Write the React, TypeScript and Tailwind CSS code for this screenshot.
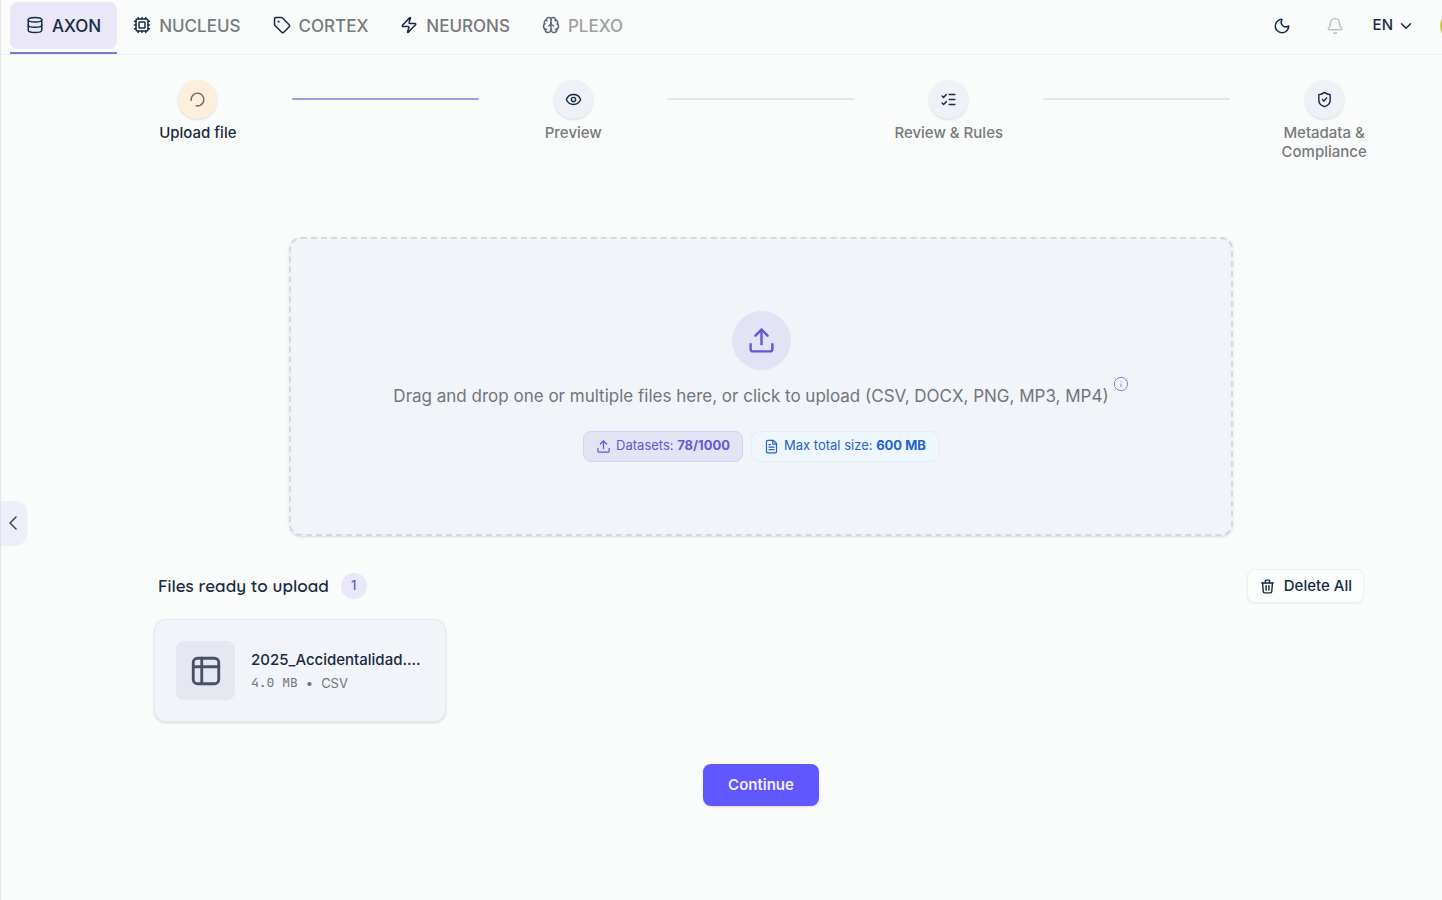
import { Fragment } from 'react';
import {
    Bell,
    Brain,
    ChevronDown,
    ChevronLeft,
    Cpu,
    Database,
    Eye,
    FileText,
    Info,
    ListChecks,
    Moon,
    ShieldCheck,
    Tag,
    Upload,
    Zap,
} from 'lucide-react';
import { TbTrash } from 'react-icons/tb';
import clsx from 'clsx';

const tabs = [
    { name: 'AXON', icon: Database, active: true },
    { name: 'NUCLEUS', icon: Cpu },
    { name: 'CORTEX', icon: Tag },
    { name: 'NEURONS', icon: Zap },
    { name: 'PLEXO', icon: Brain, disabled: true },
];

const steps = [
    { label: 'Upload file', icon: SpinnerIcon, current: true },
    { label: 'Preview', icon: Eye },
    { label: 'Review & Rules', icon: ListChecks },
    { label: 'Metadata & Compliance', icon: ShieldCheck },
];

const files = [{ name: '2025_Accidentalidad....', size: '4.0 MB', type: 'CSV' }];

function SpinnerIcon({ className }: { className?: string }) {
    return (
        <svg className={className} viewBox="0 0 24 24" fill="none" stroke="currentColor" strokeWidth={2} strokeLinecap="round">
            <path d="M3.100 13.300 A9 9 0 1 1 10.400 20.900" />
        </svg>
    );
}

function TableIcon({ className }: { className?: string }) {
    return (
        <svg className={className} viewBox="0 0 24 24" fill="none" stroke="currentColor" strokeWidth={2} strokeLinecap="round" strokeLinejoin="round">
            <rect x="3" y="3" width="18" height="18" rx="3" />
            <path d="M3 9h18M9 3v18" />
        </svg>
    );
}

function Header() {
    return (
        <header className="flex h-[55px] items-stretch justify-between border-b border-[#edeff0] pl-[9px]">
            <nav className="flex">
                {tabs.map(({ name, icon: Icon, active, disabled }) => (
                    <a
                        key={name}
                        href="#"
                        aria-disabled={disabled}
                        className={clsx(
                            'flex flex-col pt-[2px] text-[17px] font-medium',
                            active ? 'border-b-2 border-[#7d74d6] text-[#182b40]' : 'text-[#777a7c]',
                            disabled && 'opacity-70'
                        )}
                    >
                        <span className={clsx('flex h-[47px] items-center gap-2 rounded-lg px-4 pt-[3px]', active && 'bg-[#e9e7f8]')}>
                            <Icon className="mb-1 size-[18px] text-[#182b40]" />
                            {name}
                        </span>
                    </a>
                ))}
            </nav>
            <div className="flex items-center overflow-hidden pb-[3px] text-[#182b40]">
                <button type="button" aria-label="Dark mode" className="mr-[35px]">
                    <Moon className="size-[18px]" />
                </button>
                <button type="button" aria-label="Notifications" className="mr-[29px] text-[#bfc1c3]">
                    <Bell className="size-[18px]" />
                </button>
                <button type="button" className="mr-[25px] flex items-center gap-1 text-[15px] font-medium">
                    EN
                    <ChevronDown className="size-[18px]" />
                </button>
                <span className="-mr-[30px] size-8 shrink-0 rounded-full bg-[#c9c94a]" />
            </div>
        </header>
    );
}

function Stepper() {
    return (
        <ol className="grid grid-cols-7">
            {steps.map(({ label, icon: Icon, current }, index) => (
                <Fragment key={label}>
                    {index > 0 && (
                        <li
                            aria-hidden
                            className={clsx('mt-[18px] h-[2px] rounded-full', index === 1 ? 'bg-[#a49be6]' : 'bg-[#e3e6e8]')}
                        />
                    )}
                    <li className="flex flex-col items-center">
                        <span
                            className={clsx(
                                'flex size-[39px] items-center justify-center rounded-full shadow-sm',
                                current ? 'bg-[#fdeedd] text-[#7a6250]' : 'bg-[#eff1f8] text-[#182b40]'
                            )}
                        >
                            <Icon className="size-[17px]" />
                        </span>
                        <span
                            className={clsx(
                                'mt-1 max-w-[110px] text-center text-[15px] leading-[19px] font-medium',
                                current ? 'text-[#182b40]' : 'text-[#777a7c]'
                            )}
                        >
                            {label}
                        </span>
                    </li>
                </Fragment>
            ))}
        </ol>
    );
}

function Dropzone() {
    return (
        <section className="mx-auto mt-[76px] flex h-[299px] w-full max-w-[944px] flex-col items-center justify-center rounded-xl border-2 border-dashed border-[#d6d9dd] bg-[#f1f4f9] pb-px shadow-sm">
            <span className="flex size-[59px] items-center justify-center rounded-full bg-[#e3e3f6]">
                <Upload className="size-[29px] text-[#6558d9]" />
            </span>
            <p className="mt-3 flex text-[17px] leading-7 text-[#727579]">
                Drag and drop one or multiple files here, or click to upload (CSV, DOCX, PNG, MP3, MP4)
                <button type="button" aria-label="Supported formats" className="-mt-1.5 ml-1 self-start text-[#8a80df]">
                    <Info className="size-4" strokeWidth={1.5} />
                </button>
            </p>
            <div className="mt-[21px] flex gap-2 text-[13px]">
                <span className="flex h-[31px] items-center gap-[5px] rounded-lg border border-[#d5d2f1] bg-[#e3e3f6] px-3 text-[#6558d9]">
                    <Upload className="size-[15px]" />
                    <span>
                        Datasets: <b>78/1000</b>
                    </span>
                </span>
                <span className="flex h-[31px] items-center gap-[5px] rounded-lg border border-[#e3eefb] bg-[#eff7fe] px-3 text-[#2563c4]">
                    <FileText className="size-[15px]" />
                    <span>
                        Max total size: <b>600 MB</b>
                    </span>
                </span>
            </div>
        </section>
    );
}

function FileList() {
    return (
        <section className="mx-[50px] mt-[33px]">
            <div className="flex items-center justify-between px-1">
                <h2 className="flex items-center gap-3 font-[Quicksand,Lato,sans-serif] text-[17px] font-semibold text-[#182b40]">
                    Files ready to upload
                    <span className="flex h-[26px] min-w-[26px] items-center justify-center rounded-full bg-[#e9e7fa] font-[Inter,sans-serif] text-[13px] font-medium text-[#6558d9]">
                        {files.length}
                    </span>
                </h2>
                <button
                    type="button"
                    className="flex h-[34px] items-center gap-2 rounded-lg border border-[#eef0f1] bg-[#fcfdfd] px-[11px] text-[15px] font-medium text-[#182b40] shadow-xs"
                >
                    <TbTrash className="size-[17px]" />
                    Delete All
                </button>
            </div>
            <ul className="mt-4 grid grid-cols-4 gap-4">
                {files.map((file) => (
                    <li
                        key={file.name}
                        className="flex h-[103px] items-center gap-4 rounded-xl border border-[#e6e9ed] bg-[#f1f4f9] px-[21px] shadow-sm"
                    >
                        <span className="flex size-[59px] shrink-0 items-center justify-center rounded-lg bg-[#e5e8f1]">
                            <TableIcon className="size-[34px] text-[#475068]" />
                        </span>
                        <div>
                            <p className="text-[15px] leading-6 font-medium text-[#182b40]">{file.name}</p>
                            <p className="flex items-center gap-2 text-[13px] leading-[22px] text-[#727579]">
                                <span className="font-['JetBrains_Mono','Liberation_Mono',monospace]">{file.size}</span>
                                <span>•</span>
                                <span>{file.type}</span>
                            </p>
                        </div>
                    </li>
                ))}
            </ul>
        </section>
    );
}

export default function App() {
    return (
        <div className="relative min-h-screen border-l border-[#e4e6e8] bg-[#fafcfb] font-[Inter,sans-serif]">
            <Header />
            <button
                type="button"
                aria-label="Collapse sidebar"
                className="absolute top-[501px] left-0 flex h-11 w-[26px] items-center justify-center rounded-r-xl bg-[#edeef7] pr-[3px] text-[#3b4250] shadow-xs"
            >
                <ChevronLeft className="size-6 shrink-0" strokeWidth={1.5} />
            </button>
            <main className="pt-[25px] pr-6 pl-[103px]">
                <Stepper />
                <Dropzone />
                <FileList />
                <div className="mt-[42px] flex justify-center">
                    <button
                        type="button"
                        className="h-[42px] rounded-lg bg-[#6157ff] px-[25px] text-[15px] font-semibold text-[#eeedff] shadow-sm"
                    >
                        Continue
                    </button>
                </div>
            </main>
        </div>
    );
}
